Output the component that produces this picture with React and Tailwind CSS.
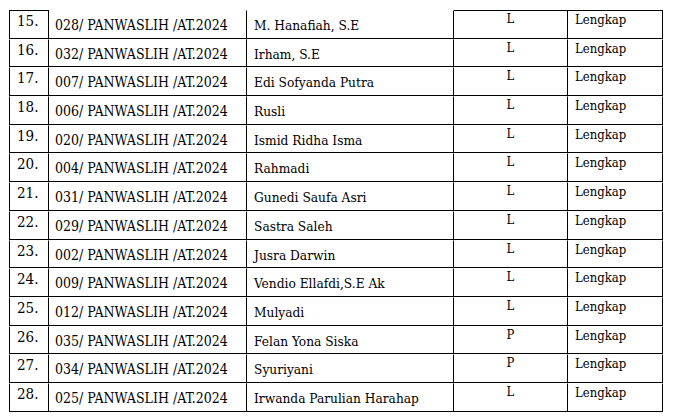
const rows = [
  ["15.", "028", "M. Hanafiah, S.E", "L"],
  ["16.", "032", "Irham, S.E", "L"],
  ["17.", "007", "Edi Sofyanda Putra", "L"],
  ["18.", "006", "Rusli", "L"],
  ["19.", "020", "Ismid Ridha Isma", "L"],
  ["20.", "004", "Rahmadi", "L"],
  ["21.", "031", "Gunedi Saufa Asri", "L"],
  ["22.", "029", "Sastra Saleh", "L"],
  ["23.", "002", "Jusra Darwin", "L"],
  ["24.", "009", "Vendio Ellafdi,S.E Ak", "L"],
  ["25.", "012", "Mulyadi", "L"],
  ["26.", "035", "Felan Yona Siska", "P"],
  ["27.", "034", "Syuriyani", "P"],
  ["28.", "025", "Irwanda Parulian Harahap", "L"],
];

const font = {
  fontFamily: '"DejaVu Serif Condensed", "DejaVu Serif", serif',
};

export default function App() {
  return (
    <div
      className="w-[673px] h-[420px] bg-white text-black pt-[10px] pl-[9px] font-stretch-condensed"
      style={font}
    >
      {rows.map(([no, code, name, sex], i) => {
        // the top rule only runs over the number column and the right table
        const top = i === 0 ? "border-t border-t-black" : "border-t border-t-transparent";
        return (
          <div key={no} className="flex h-[28.7px] text-[13px] leading-[16px]">
            <div className={`w-[40px] shrink-0 border-l border-r border-b border-black pl-[7px] pt-[2px] text-[15px] ${top}`}>
              {no}
            </div>
            <div className="w-[198px] shrink-0 border-r border-b border-t border-t-transparent border-black pl-[6px] pt-[6px] text-[14px] whitespace-nowrap">
              {code}/ PANWASLIH /AT.2024
            </div>
            <div className="w-[207px] shrink-0 border-r border-b border-t border-t-transparent border-black pl-[7px] pt-[6px] text-[13.6px] whitespace-nowrap">
              {name}
            </div>
            <div className={`w-[114px] shrink-0 border-r border-b border-black text-center pt-[0px] ${top}`}>
              {sex}
            </div>
            <div className={`w-[95px] shrink-0 border-r border-b border-black pl-[7px] pt-[1px] ${top}`}>
              Lengkap
            </div>
          </div>
        );
      })}
    </div>
  );
}
